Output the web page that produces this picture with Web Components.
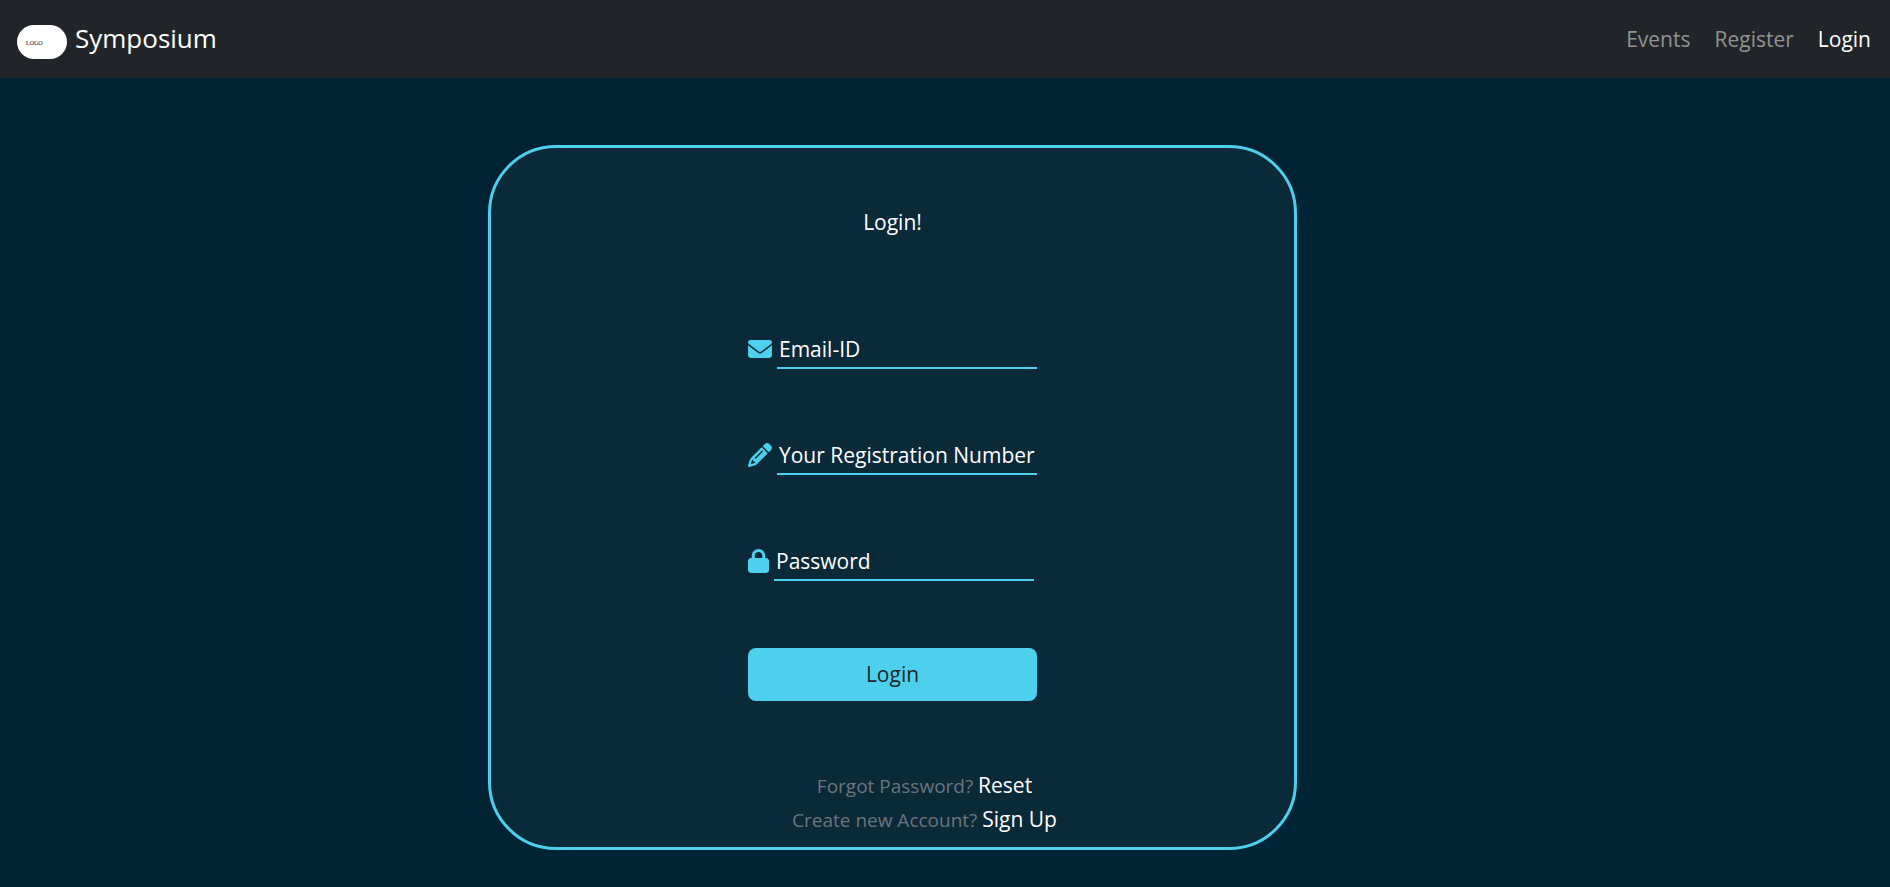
<!DOCTYPE html>
<html lang="en">
<head>
<meta charset="utf-8">
<meta name="viewport" content="width=device-width, initial-scale=1">
<title>Symposium – Login</title>
<style>
  html { height: 100%; }
  body {
    margin: 0;
    min-height: 100%;
    background: #002333;
    color: #fff;
    font-family: "Open Sans", "Noto Sans", sans-serif;
    font-size: 21px;
    line-height: 32px;
  }
</style>
</head>
<body>
<site-header>
  <nav-link href="#events">Events</nav-link>
  <nav-link href="#register">Register</nav-link>
  <nav-link href="#login" active>Login</nav-link>
</site-header>
<login-card>
  <form-field kind="email" name="email" placeholder="Email-ID"></form-field>
  <form-field kind="text" name="regno" placeholder="Your Registration Number"></form-field>
  <form-field kind="password" name="password" placeholder="Password"></form-field>
</login-card>

<script>
const ICONS = {
  email: { w: 24, box: '0 0 512 512', d: 'M48 64C21.500 64 0 85.500 0 112c0 15.100 7.100 29.300 19.200 38.400L236.800 313.600c11.400 8.500 27 8.500 38.400 0L492.800 150.400c12.100-9.100 19.200-23.300 19.200-38.400c0-26.500-21.500-48-48-48H48zM0 176V384c0 35.300 28.700 64 64 64H448c35.300 0 64-28.700 64-64V176L294.400 339.200c-22.800 17.100-54 17.100-76.800 0L0 176z' },
  text: { w: 24, box: '0 0 512 512', d: 'M410.300 231l11.300-11.300-33.900-33.900-62.100-62.100L291.700 89.800l-11.300 11.300-22.600 22.600L58.600 322.900c-10.400 10.400-18 23.300-22.200 37.400L1 480.700c-2.500 8.400-.2 17.500 6.100 23.700s15.300 8.500 23.700 6.100l120.300-35.400c14.100-4.200 27-11.800 37.400-22.200L387.700 253.700 410.300 231zM160 399.400l-9.100 22.700c-4 3.100-8.500 5.400-13.300 6.900L59.400 452l23-78.100c1.400-4.900 3.800-9.400 6.900-13.300l22.700-9.100v32c0 8.800 7.200 16 16 16h32zM362.700 18.700L348.300 33.200 325.700 55.800 314.300 67.100l33.900 33.900 62.100 62.100 33.900 33.900 11.300-11.300 22.600-22.600 14.500-14.500c25-25 25-65.500 0-90.500L453.300 18.700c-25-25-65.500-25-90.500 0zm-47.400 168l-144 144c-6.200 6.200-16.400 6.200-22.600 0s-6.200-16.400 0-22.600l144-144c6.200-6.200 16.400-6.200 22.600 0s6.200 16.400 0 22.600z' },
  password: { w: 21, box: '0 0 448 512', d: 'M144 144v48H304V144c0-44.200-35.800-80-80-80s-80 35.800-80 80zM80 192V144C80 64.500 144.500 0 224 0s144 64.500 144 144v48h16c35.300 0 64 28.700 64 64V448c0 35.300-28.700 64-64 64H64c-35.300 0-64-28.700-64-64V256c0-35.300 28.700-64 64-64H80z' }
};

customElements.define('nav-link', class extends HTMLElement {
  connectedCallback() {
    const active = this.hasAttribute('active');
    this.attachShadow({ mode: 'open' }).innerHTML = `
      <style>
        :host { display: block; }
        a { display: block; color: #919294; text-decoration: none; }
        a[aria-current] { color: #fff; }
      </style>
      <a href="${this.getAttribute('href')}" ${active ? 'aria-current="page"' : ''}><slot></slot></a>`;
  }
});

customElements.define('site-header', class extends HTMLElement {
  connectedCallback() {
    this.attachShadow({ mode: 'open' }).innerHTML = `
      <style>
        :host { display: flex; align-items: center; justify-content: space-between;
                box-sizing: border-box; min-height: 78px; padding: 0 19px 0 17px; background: #212529; }
        .brand { display: flex; align-items: center; gap: 8px; padding-bottom: 2px; color: #fff;
                 text-decoration: none; font-size: 26px; }
        .logo { display: flex; align-items: center; box-sizing: border-box; width: 50px; height: 34px;
                margin-top: 8px; padding: 2px 0 0 9px; border-radius: 17px; background: #fff; color: #112;
                font: 6px/8px "Liberation Serif", serif; }
        nav { display: flex; gap: 24px; }
      </style>
      <a class="brand" href="#home"><span class="logo">LOGO</span><span>Symposium</span></a>
      <nav><slot></slot></nav>`;
  }
});

customElements.define('form-field', class extends HTMLElement {
  connectedCallback() {
    const kind = this.getAttribute('kind');
    const name = this.getAttribute('name');
    const label = this.getAttribute('placeholder');
    const icon = ICONS[kind];
    this.attachShadow({ mode: 'open' }).innerHTML = `
      <style>
        :host { display: flex; align-items: center; }
        label { display: flex; margin-right: 5px; }
        svg { display: block; height: 24px; fill: #4dd0ed; }
        input { box-sizing: border-box; width: 260px; height: 40px; margin: 0; padding: 4px 2px 2px;
                border: 0; border-bottom: 2px solid #4dd0ed; outline: 0; background: transparent;
                color: #fff; font: inherit; }
        input::placeholder { color: #fff; opacity: 1; }
      </style>
      <label for="${name}" aria-label="${label}">
        <svg width="${icon.w}" viewBox="${icon.box}" aria-hidden="true"><path d="${icon.d}"/></svg>
      </label>
      <input id="${name}" name="${name}" type="${kind}" placeholder="${label}">`;
  }
});

customElements.define('login-card', class extends HTMLElement {
  connectedCallback() {
    this.attachShadow({ mode: 'open' }).innerHTML = `
      <style>
        :host { display: grid; grid-template-columns: 488fr 809fr 593fr; padding: 67px 0 36px; }
        section { grid-column: 2; box-sizing: border-box; padding: 58px 0 10px;
                  border: 3px solid #4dd0ed; border-radius: 68px; background: #0a2939;
                  box-shadow: 10px 10px 20px #002638; }
        h1 { margin: 0 0 91px; font: inherit; text-align: center; }
        form { display: grid; width: 289px; margin: 0 auto 68px; }
        .fields { display: grid; gap: 66px; }
        button { height: 53px; margin: 67px 0 0; padding: 0 0 2px; border: 0; border-radius: 8px;
                 background: #4dd0ed; color: #212529; font: inherit; }
        ul { margin: 0; padding: 0 0 0 64px; list-style: none; text-align: center; }
        li { line-height: 34px; color: #6c757d; font-size: 19px; }
        li a { color: #fff; font-size: 21px; line-height: 24px; text-decoration: none; }
      </style>
      <section>
        <h1>Login!</h1>
        <form>
          <div class="fields"><slot></slot></div>
          <button type="button">Login</button>
        </form>
        <ul>
          <li>Forgot Password? <a href="#reset">Reset</a></li>
          <li>Create new Account? <a href="#register">Sign Up</a></li>
        </ul>
      </section>`;
  }
});
</script>
</body>
</html>
